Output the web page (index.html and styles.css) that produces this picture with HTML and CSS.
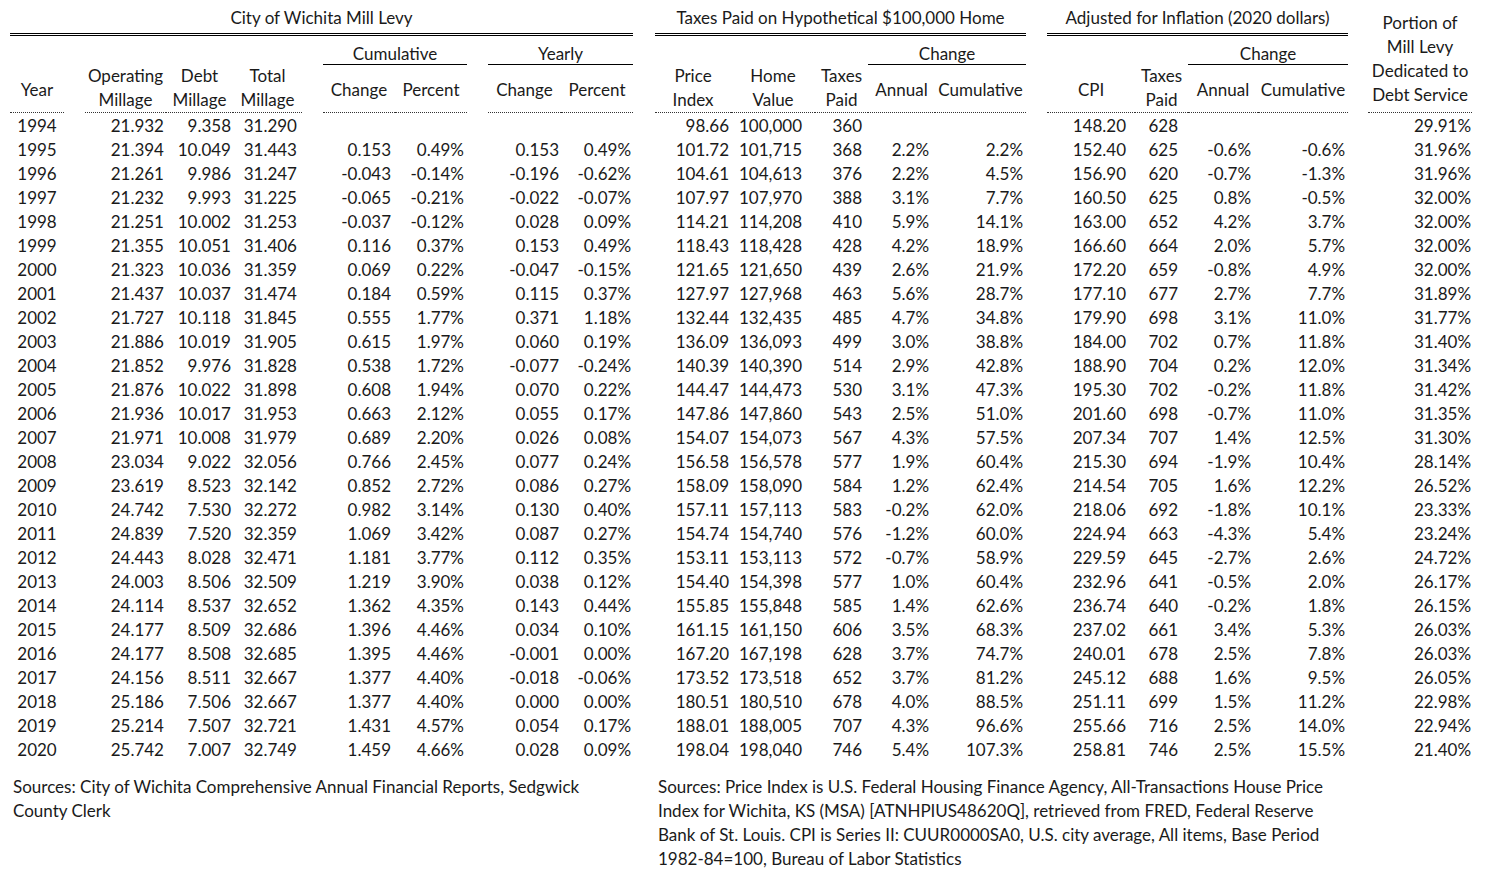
FILE: index.html
```html
<!DOCTYPE html>
<html lang="en">
<head>
<meta charset="utf-8">
<title>City of Wichita Mill Levy</title>
<link rel="stylesheet" href="styles.css">
</head>
<body>
<div class="page">
<table class="levy">
<colgroup>
<col style="width:54px"><col style="width:21px"><col style="width:81px"><col style="width:67px"><col style="width:69px"><col style="width:21px"><col style="width:72px"><col style="width:72px"><col style="width:21px"><col style="width:73px"><col style="width:72px"><col style="width:22px"><col style="width:76px"><col style="width:84px"><col style="width:53px"><col style="width:67px"><col style="width:91px"><col style="width:21px"><col style="width:88px"><col style="width:53px"><col style="width:70px"><col style="width:90px"><col style="width:20px"><col style="width:104px">
</colgroup>
<thead>
<tr class="r-title">
<th colspan="11" class="grp">City of Wichita Mill Levy</th>
<th></th>
<th colspan="5" class="grp">Taxes Paid on Hypothetical $100,000 Home</th>
<th></th>
<th colspan="4" class="grp">Adjusted for Inflation (2020 dollars)</th>
<th></th>
<th rowspan="3" class="portion">Portion of<br>Mill Levy<br>Dedicated to<br>Debt Service</th>
</tr>
<tr class="r-sub">
<th rowspan="2" class="h1">Year</th>
<th rowspan="2"></th>
<th rowspan="2" class="h2">Operating<br>Millage</th>
<th rowspan="2" class="h2">Debt<br>Millage</th>
<th rowspan="2" class="h2">Total<br>Millage</th>
<th rowspan="2"></th>
<th colspan="2" class="sub">Cumulative</th>
<th rowspan="2"></th>
<th colspan="2" class="sub">Yearly</th>
<th rowspan="2"></th>
<th rowspan="2" class="h2">Price<br>Index</th>
<th rowspan="2" class="h2">Home<br>Value</th>
<th rowspan="2" class="h2">Taxes<br>Paid</th>
<th colspan="2" class="sub">Change</th>
<th rowspan="2"></th>
<th rowspan="2" class="h1">CPI</th>
<th rowspan="2" class="h2">Taxes<br>Paid</th>
<th colspan="2" class="sub">Change</th>
<th rowspan="2"></th>
</tr>
<tr class="r-head">
<th>Change</th><th>Percent</th>
<th>Change</th><th>Percent</th>
<th>Annual</th><th>Cumulative</th>
<th>Annual</th><th>Cumulative</th>
</tr>
</thead>
<tbody>
<tr><td>1994</td><td></td><td>21.932</td><td>9.358</td><td>31.290</td><td></td><td></td><td></td><td></td><td></td><td></td><td></td><td>98.66</td><td>100,000</td><td>360</td><td></td><td></td><td></td><td>148.20</td><td>628</td><td></td><td></td><td></td><td>29.91%</td></tr>
<tr><td>1995</td><td></td><td>21.394</td><td>10.049</td><td>31.443</td><td></td><td>0.153</td><td>0.49%</td><td></td><td>0.153</td><td>0.49%</td><td></td><td>101.72</td><td>101,715</td><td>368</td><td>2.2%</td><td>2.2%</td><td></td><td>152.40</td><td>625</td><td>-0.6%</td><td>-0.6%</td><td></td><td>31.96%</td></tr>
<tr><td>1996</td><td></td><td>21.261</td><td>9.986</td><td>31.247</td><td></td><td>-0.043</td><td>-0.14%</td><td></td><td>-0.196</td><td>-0.62%</td><td></td><td>104.61</td><td>104,613</td><td>376</td><td>2.2%</td><td>4.5%</td><td></td><td>156.90</td><td>620</td><td>-0.7%</td><td>-1.3%</td><td></td><td>31.96%</td></tr>
<tr><td>1997</td><td></td><td>21.232</td><td>9.993</td><td>31.225</td><td></td><td>-0.065</td><td>-0.21%</td><td></td><td>-0.022</td><td>-0.07%</td><td></td><td>107.97</td><td>107,970</td><td>388</td><td>3.1%</td><td>7.7%</td><td></td><td>160.50</td><td>625</td><td>0.8%</td><td>-0.5%</td><td></td><td>32.00%</td></tr>
<tr><td>1998</td><td></td><td>21.251</td><td>10.002</td><td>31.253</td><td></td><td>-0.037</td><td>-0.12%</td><td></td><td>0.028</td><td>0.09%</td><td></td><td>114.21</td><td>114,208</td><td>410</td><td>5.9%</td><td>14.1%</td><td></td><td>163.00</td><td>652</td><td>4.2%</td><td>3.7%</td><td></td><td>32.00%</td></tr>
<tr><td>1999</td><td></td><td>21.355</td><td>10.051</td><td>31.406</td><td></td><td>0.116</td><td>0.37%</td><td></td><td>0.153</td><td>0.49%</td><td></td><td>118.43</td><td>118,428</td><td>428</td><td>4.2%</td><td>18.9%</td><td></td><td>166.60</td><td>664</td><td>2.0%</td><td>5.7%</td><td></td><td>32.00%</td></tr>
<tr><td>2000</td><td></td><td>21.323</td><td>10.036</td><td>31.359</td><td></td><td>0.069</td><td>0.22%</td><td></td><td>-0.047</td><td>-0.15%</td><td></td><td>121.65</td><td>121,650</td><td>439</td><td>2.6%</td><td>21.9%</td><td></td><td>172.20</td><td>659</td><td>-0.8%</td><td>4.9%</td><td></td><td>32.00%</td></tr>
<tr><td>2001</td><td></td><td>21.437</td><td>10.037</td><td>31.474</td><td></td><td>0.184</td><td>0.59%</td><td></td><td>0.115</td><td>0.37%</td><td></td><td>127.97</td><td>127,968</td><td>463</td><td>5.6%</td><td>28.7%</td><td></td><td>177.10</td><td>677</td><td>2.7%</td><td>7.7%</td><td></td><td>31.89%</td></tr>
<tr><td>2002</td><td></td><td>21.727</td><td>10.118</td><td>31.845</td><td></td><td>0.555</td><td>1.77%</td><td></td><td>0.371</td><td>1.18%</td><td></td><td>132.44</td><td>132,435</td><td>485</td><td>4.7%</td><td>34.8%</td><td></td><td>179.90</td><td>698</td><td>3.1%</td><td>11.0%</td><td></td><td>31.77%</td></tr>
<tr><td>2003</td><td></td><td>21.886</td><td>10.019</td><td>31.905</td><td></td><td>0.615</td><td>1.97%</td><td></td><td>0.060</td><td>0.19%</td><td></td><td>136.09</td><td>136,093</td><td>499</td><td>3.0%</td><td>38.8%</td><td></td><td>184.00</td><td>702</td><td>0.7%</td><td>11.8%</td><td></td><td>31.40%</td></tr>
<tr><td>2004</td><td></td><td>21.852</td><td>9.976</td><td>31.828</td><td></td><td>0.538</td><td>1.72%</td><td></td><td>-0.077</td><td>-0.24%</td><td></td><td>140.39</td><td>140,390</td><td>514</td><td>2.9%</td><td>42.8%</td><td></td><td>188.90</td><td>704</td><td>0.2%</td><td>12.0%</td><td></td><td>31.34%</td></tr>
<tr><td>2005</td><td></td><td>21.876</td><td>10.022</td><td>31.898</td><td></td><td>0.608</td><td>1.94%</td><td></td><td>0.070</td><td>0.22%</td><td></td><td>144.47</td><td>144,473</td><td>530</td><td>3.1%</td><td>47.3%</td><td></td><td>195.30</td><td>702</td><td>-0.2%</td><td>11.8%</td><td></td><td>31.42%</td></tr>
<tr><td>2006</td><td></td><td>21.936</td><td>10.017</td><td>31.953</td><td></td><td>0.663</td><td>2.12%</td><td></td><td>0.055</td><td>0.17%</td><td></td><td>147.86</td><td>147,860</td><td>543</td><td>2.5%</td><td>51.0%</td><td></td><td>201.60</td><td>698</td><td>-0.7%</td><td>11.0%</td><td></td><td>31.35%</td></tr>
<tr><td>2007</td><td></td><td>21.971</td><td>10.008</td><td>31.979</td><td></td><td>0.689</td><td>2.20%</td><td></td><td>0.026</td><td>0.08%</td><td></td><td>154.07</td><td>154,073</td><td>567</td><td>4.3%</td><td>57.5%</td><td></td><td>207.34</td><td>707</td><td>1.4%</td><td>12.5%</td><td></td><td>31.30%</td></tr>
<tr><td>2008</td><td></td><td>23.034</td><td>9.022</td><td>32.056</td><td></td><td>0.766</td><td>2.45%</td><td></td><td>0.077</td><td>0.24%</td><td></td><td>156.58</td><td>156,578</td><td>577</td><td>1.9%</td><td>60.4%</td><td></td><td>215.30</td><td>694</td><td>-1.9%</td><td>10.4%</td><td></td><td>28.14%</td></tr>
<tr><td>2009</td><td></td><td>23.619</td><td>8.523</td><td>32.142</td><td></td><td>0.852</td><td>2.72%</td><td></td><td>0.086</td><td>0.27%</td><td></td><td>158.09</td><td>158,090</td><td>584</td><td>1.2%</td><td>62.4%</td><td></td><td>214.54</td><td>705</td><td>1.6%</td><td>12.2%</td><td></td><td>26.52%</td></tr>
<tr><td>2010</td><td></td><td>24.742</td><td>7.530</td><td>32.272</td><td></td><td>0.982</td><td>3.14%</td><td></td><td>0.130</td><td>0.40%</td><td></td><td>157.11</td><td>157,113</td><td>583</td><td>-0.2%</td><td>62.0%</td><td></td><td>218.06</td><td>692</td><td>-1.8%</td><td>10.1%</td><td></td><td>23.33%</td></tr>
<tr><td>2011</td><td></td><td>24.839</td><td>7.520</td><td>32.359</td><td></td><td>1.069</td><td>3.42%</td><td></td><td>0.087</td><td>0.27%</td><td></td><td>154.74</td><td>154,740</td><td>576</td><td>-1.2%</td><td>60.0%</td><td></td><td>224.94</td><td>663</td><td>-4.3%</td><td>5.4%</td><td></td><td>23.24%</td></tr>
<tr><td>2012</td><td></td><td>24.443</td><td>8.028</td><td>32.471</td><td></td><td>1.181</td><td>3.77%</td><td></td><td>0.112</td><td>0.35%</td><td></td><td>153.11</td><td>153,113</td><td>572</td><td>-0.7%</td><td>58.9%</td><td></td><td>229.59</td><td>645</td><td>-2.7%</td><td>2.6%</td><td></td><td>24.72%</td></tr>
<tr><td>2013</td><td></td><td>24.003</td><td>8.506</td><td>32.509</td><td></td><td>1.219</td><td>3.90%</td><td></td><td>0.038</td><td>0.12%</td><td></td><td>154.40</td><td>154,398</td><td>577</td><td>1.0%</td><td>60.4%</td><td></td><td>232.96</td><td>641</td><td>-0.5%</td><td>2.0%</td><td></td><td>26.17%</td></tr>
<tr><td>2014</td><td></td><td>24.114</td><td>8.537</td><td>32.652</td><td></td><td>1.362</td><td>4.35%</td><td></td><td>0.143</td><td>0.44%</td><td></td><td>155.85</td><td>155,848</td><td>585</td><td>1.4%</td><td>62.6%</td><td></td><td>236.74</td><td>640</td><td>-0.2%</td><td>1.8%</td><td></td><td>26.15%</td></tr>
<tr><td>2015</td><td></td><td>24.177</td><td>8.509</td><td>32.686</td><td></td><td>1.396</td><td>4.46%</td><td></td><td>0.034</td><td>0.10%</td><td></td><td>161.15</td><td>161,150</td><td>606</td><td>3.5%</td><td>68.3%</td><td></td><td>237.02</td><td>661</td><td>3.4%</td><td>5.3%</td><td></td><td>26.03%</td></tr>
<tr><td>2016</td><td></td><td>24.177</td><td>8.508</td><td>32.685</td><td></td><td>1.395</td><td>4.46%</td><td></td><td>-0.001</td><td>0.00%</td><td></td><td>167.20</td><td>167,198</td><td>628</td><td>3.7%</td><td>74.7%</td><td></td><td>240.01</td><td>678</td><td>2.5%</td><td>7.8%</td><td></td><td>26.03%</td></tr>
<tr><td>2017</td><td></td><td>24.156</td><td>8.511</td><td>32.667</td><td></td><td>1.377</td><td>4.40%</td><td></td><td>-0.018</td><td>-0.06%</td><td></td><td>173.52</td><td>173,518</td><td>652</td><td>3.7%</td><td>81.2%</td><td></td><td>245.12</td><td>688</td><td>1.6%</td><td>9.5%</td><td></td><td>26.05%</td></tr>
<tr><td>2018</td><td></td><td>25.186</td><td>7.506</td><td>32.667</td><td></td><td>1.377</td><td>4.40%</td><td></td><td>0.000</td><td>0.00%</td><td></td><td>180.51</td><td>180,510</td><td>678</td><td>4.0%</td><td>88.5%</td><td></td><td>251.11</td><td>699</td><td>1.5%</td><td>11.2%</td><td></td><td>22.98%</td></tr>
<tr><td>2019</td><td></td><td>25.214</td><td>7.507</td><td>32.721</td><td></td><td>1.431</td><td>4.57%</td><td></td><td>0.054</td><td>0.17%</td><td></td><td>188.01</td><td>188,005</td><td>707</td><td>4.3%</td><td>96.6%</td><td></td><td>255.66</td><td>716</td><td>2.5%</td><td>14.0%</td><td></td><td>22.94%</td></tr>
<tr><td>2020</td><td></td><td>25.742</td><td>7.007</td><td>32.749</td><td></td><td>1.459</td><td>4.66%</td><td></td><td>0.028</td><td>0.09%</td><td></td><td>198.04</td><td>198,040</td><td>746</td><td>5.4%</td><td>107.3%</td><td></td><td>258.81</td><td>746</td><td>2.5%</td><td>15.5%</td><td></td><td>21.40%</td></tr>
</tbody>
</table>
<div class="sources">
<p class="src src-left">Sources: City of Wichita Comprehensive Annual Financial Reports, Sedgwick<br>County Clerk</p>
<p class="src src-right">Sources: Price Index is U.S. Federal Housing Finance Agency, All-Transactions House Price<br>Index for Wichita, KS (MSA) [ATNHPIUS48620Q], retrieved from FRED, Federal Reserve<br>Bank of St. Louis. CPI is Series II: CUUR0000SA0, U.S. city average, All items, Base Period<br>1982-84=100, Bureau of Labor Statistics</p>
</div>
</div>
</body>
</html>
```
FILE: styles.css
```css
html, body {
  margin: 0;
  background: #ffffff;
}
body {
  color: #1a1a1a;
  font-family: Lato, "Open Sans", "Liberation Sans", sans-serif;
  font-size: 17px;
}
.page {
  padding-left: 10px;
}
.levy {
  border-collapse: separate;
  border-spacing: 0;
  table-layout: fixed;
  width: 1462px;
}
.levy th,
.levy td {
  padding: 0;
  font-weight: normal;
  line-height: 24px;
  white-space: nowrap;
  text-align: center;
}
.levy thead th {
  vertical-align: bottom;
}
.r-title .grp {
  padding: 6px 0 3px;
  border-bottom: 3px double #000;
  vertical-align: middle;
}
.r-sub .sub {
  padding: 8px 0 0;
  line-height: 20px;
  border-bottom: 1px solid #000;
}
.r-head th {
  padding: 13px 0 10px;
  border-bottom: 1px dotted #333;
}
.levy .h1 {
  padding-bottom: 10px;
  border-bottom: 1px dotted #333;
}
.levy .h2 {
  padding-bottom: 0;
  border-bottom: 1px dotted #333;
}
.levy .portion {
  padding-bottom: 5px;
  border-bottom: 1px dotted #333;
}
.levy tbody td {
  text-align: right;
  padding-top: 2px;
  line-height: 22px;
}
.levy tbody td:nth-child(1) { text-align: center; }
.levy tbody td:nth-child(3) { padding-right: 2px; }
.levy tbody td:nth-child(4) { padding-right: 2px; }
.levy tbody td:nth-child(5) { padding-right: 5px; }
.levy tbody td:nth-child(7) { padding-right: 4px; }
.levy tbody td:nth-child(8) { padding-right: 3px; }
.levy tbody td:nth-child(10) { padding-right: 2px; }
.levy tbody td:nth-child(11) { padding-right: 2px; }
.levy tbody td:nth-child(13) { padding-right: 2px; }
.levy tbody td:nth-child(14) { padding-right: 13px; }
.levy tbody td:nth-child(15) { padding-right: 6px; }
.levy tbody td:nth-child(16) { padding-right: 6px; }
.levy tbody td:nth-child(17) { padding-right: 3px; }
.levy tbody td:nth-child(19) { padding-right: 9px; }
.levy tbody td:nth-child(20) { padding-right: 10px; }
.levy tbody td:nth-child(21) { padding-right: 7px; }
.levy tbody td:nth-child(22) { padding-right: 3px; }
.levy tbody td:nth-child(24) { padding-right: 1px; }
.sources {
  display: flex;
  margin-top: 14px;
}
.src {
  margin: 0;
  line-height: 24px;
  white-space: nowrap;
}
.src-left {
  width: 648px;
  padding-left: 3px;
  box-sizing: border-box;
}
```
